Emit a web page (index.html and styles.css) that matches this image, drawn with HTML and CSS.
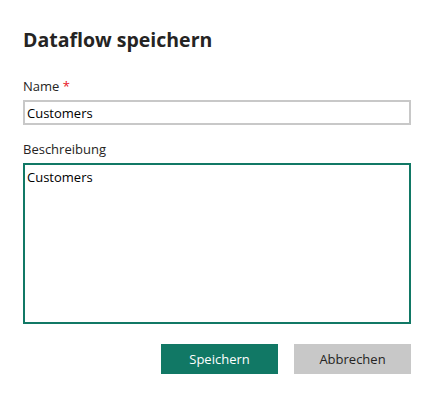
FILE: index.html
```html
<!DOCTYPE html>
<html lang="de">
<head>
    <title>Dataflow speichern</title>
    <meta charset="utf-8">
    <link rel="stylesheet" href="styles.css">
</head>
<body>
<form class="dialog">
    <h1 class="dialog-title">Dataflow speichern</h1>
    <label class="field">
        <span class="field-title">Name <span class="required">*</span></span>
        <input class="input" type="text" name="name" value="Customers">
    </label>
    <label class="field">
        <span class="field-title">Beschreibung</span>
        <textarea class="textarea" name="description">Customers</textarea>
    </label>
    <div class="actions">
        <button class="button button-primary" type="submit">Speichern</button>
        <button class="button button-secondary" type="button">Abbrechen</button>
    </div>
</form>
</body>
</html>
```

FILE: styles.css
```css
*, *::before, *::after {
    margin: 0;
    padding: 0;
    box-sizing: border-box;
}

body {
    background-color: #ffffff;
    color: #252423;
    font-family: "Open Sans", sans-serif;
    font-size: 13px;
}

.dialog {
    width: 434px;
    padding: 26px 23px 0;
}

.dialog-title {
    font-size: 19.5px;
    font-weight: 700;
    line-height: 28px;
    margin-bottom: 22px;
}

.field {
    display: block;
    margin-bottom: 14px;
}

.field-title {
    display: block;
    line-height: 20px;
    margin-bottom: 4px;
}

.required {
    color: #e81123;
}

.input, .textarea {
    display: block;
    width: 388px;
    border: 2px solid #c8c8c8;
    padding: 0 2px;
    background-color: #ffffff;
    color: #000000;
    font-family: inherit;
    font-size: 13px;
    line-height: 20px;
    outline: none;
}

.input {
    height: 25px;
}

.textarea {
    height: 161px;
    padding-top: 2px;
    border-color: #117865;
    resize: none;
}

.actions {
    display: flex;
    justify-content: flex-end;
    gap: 16px;
    width: 388px;
    margin-top: 20px;
}

.button {
    width: 117px;
    height: 30px;
    border: none;
    font-family: inherit;
    font-size: 13px;
    cursor: pointer;
}

.button-primary {
    background-color: #117865;
    color: #ffffff;
}

.button-secondary {
    background-color: #c8c8c8;
    color: #252423;
}
```
